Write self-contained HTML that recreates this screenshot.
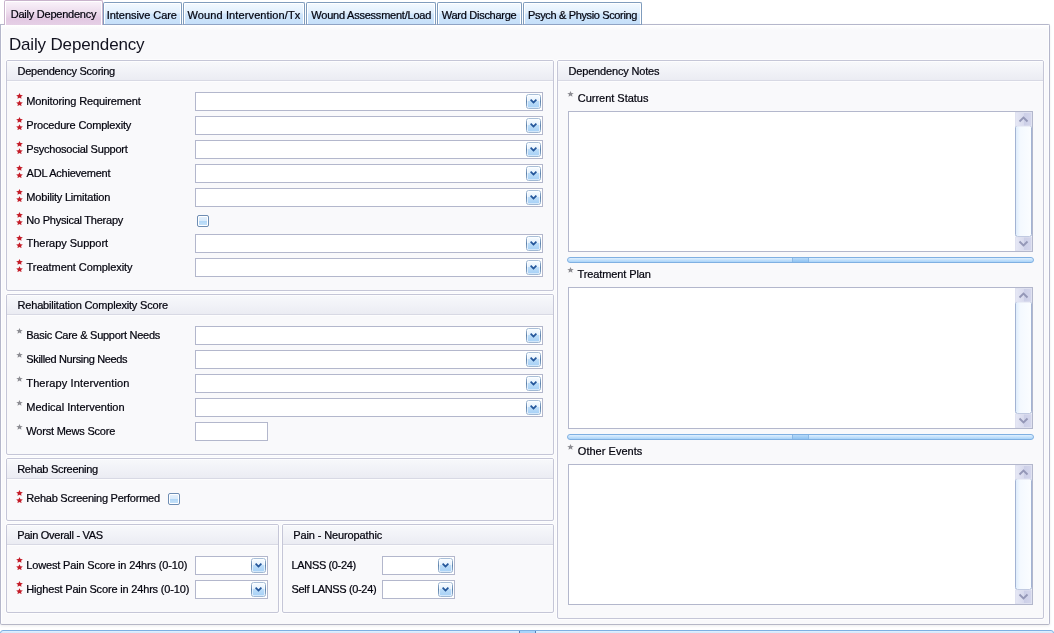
<!DOCTYPE html>
<html><head><meta charset="utf-8"><title>Daily Dependency</title>
<style>
html,body{margin:0;padding:0;background:#fff;}
body{width:1054px;height:633px;position:relative;overflow:hidden;font-family:"Liberation Sans",sans-serif;font-size:11px;color:#14142a;}
.a{position:absolute;}
.t{position:absolute;white-space:pre;line-height:14px;height:14px;color:#04040e;-webkit-text-stroke:0.22px #04040e;}
.panel{position:absolute;left:0;top:24px;width:1048px;height:599px;border:1px solid #b5b7cb;border-bottom-color:#b6b7c6;border-radius:0 2px 2px 2px;background:linear-gradient(#ffffff 0,#f9f9fb 5px);box-shadow:inset 1px 1px 0 #fff,inset -1px 0 0 #fdfdfe,0 1px 3px rgba(0,0,30,0.08);}
.grp{position:absolute;border:1px solid #c5c6d7;border-radius:2px;background:#f9f9fb;box-sizing:border-box;box-shadow:0 0 0 1px #fdfdfe;}
.grp .h{position:absolute;left:0;right:0;top:0;height:19px;border-bottom:1px solid #d8d9e4;background:linear-gradient(#fdfdfe 0,#fdfdfe 1px,#f7f8fb 1px,#ebecf3 100%);border-radius:1px 1px 0 0;box-shadow:0 1px 0 #fdfdfe;}
.in{position:absolute;box-sizing:border-box;height:19px;border:1px solid #b3b7cc;background:#fff;}
.ta{position:absolute;box-sizing:border-box;border:1px solid #b3b7cc;background:#fff;}
.dd{position:absolute;right:1px;top:1px;width:15px;height:15px;}
.cb{position:absolute;box-sizing:border-box;width:12px;height:12px;border:1px solid #6e8db3;border-radius:2px;background:#fff;}
.cb i{position:absolute;left:1px;top:1px;right:1px;bottom:1px;background:linear-gradient(#e3f0fc 0%,#d8eafb 50%,#b3d8f7 55%,#c4e1f9 100%);}
.tab{position:absolute;top:2px;height:23px;box-sizing:border-box;border:1px solid #7f9cbd;border-bottom-color:#8fa3c4;border-radius:2px 2px 0 0;background:linear-gradient(#f3f9ff 0%,#e2f0fd 45%,#cfe5fb 55%,#c6e0f9 100%);box-shadow:inset 1px 1px 0 #fff,inset -1px 0 0 #fff;}
.tab.on{top:0;height:25px;border-color:#c9b3cc;border-bottom:none;background:linear-gradient(#faf3fa 0%,#efe0ef 40%,#e3c9e3 75%,#e6d0e6 100%);}
.spl{position:absolute;box-sizing:border-box;height:6px;border:1px solid #7fb0e2;border-radius:3px;background:linear-gradient(#e0f0ff,#a9d3f8);}
.spl b{position:absolute;left:224px;top:0;width:15px;height:4px;background:linear-gradient(#b8daf9,#8fc3f2);border-left:1px solid #8bb9e6;border-right:1px solid #8bb9e6;}
.sb{position:absolute;right:0;top:0;bottom:0;width:17px;}
</style></head><body>
<svg width="0" height="0" style="position:absolute">
<defs>
<linearGradient id="gdd" x1="0" y1="0" x2="0" y2="1"><stop offset="0" stop-color="#f6fbff"/><stop offset="0.45" stop-color="#e4f1fd"/><stop offset="0.5" stop-color="#bcdcf8"/><stop offset="1" stop-color="#a9d2f6"/></linearGradient>
<linearGradient id="gddb" x1="0" y1="0" x2="0" y2="1"><stop offset="0" stop-color="#a9bfd8"/><stop offset="0.5" stop-color="#5f84ad"/><stop offset="1" stop-color="#9fb8d4"/></linearGradient>
<linearGradient id="gsbb" x1="0" y1="0" x2="1" y2="0"><stop offset="0" stop-color="#e6e8f5"/><stop offset="0.5" stop-color="#d9dbee"/><stop offset="0.55" stop-color="#cccfe7"/><stop offset="1" stop-color="#d4d6ec"/></linearGradient>
<linearGradient id="gth" x1="0" y1="0" x2="1" y2="0"><stop offset="0" stop-color="#dcebfb"/><stop offset="0.3" stop-color="#f4f9ff"/><stop offset="1" stop-color="#fbfdff"/></linearGradient>
<symbol id="dd" viewBox="0 0 15 15"><rect x="0.5" y="0.5" width="14" height="14" rx="2" fill="#fff" stroke="url(#gddb)"/><rect x="1.6" y="1.6" width="11.8" height="11.8" rx="0.8" fill="url(#gdd)"/><path d="M4 6.2 L5.2 5 L7.5 7.3 L9.8 5 L11 6.2 L7.5 9.8 Z" fill="#24569a"/></symbol>
<symbol id="rs" viewBox="0 0 7 13"><path id="st" d="M3.50 0.00 L4.47 1.99 L6.83 2.22 L5.07 3.69 L5.56 5.83 L3.50 4.74 L1.44 5.83 L1.93 3.69 L0.17 2.22 L2.53 1.99 Z" fill="#c41c28"/><use href="#st" y="7.3"/></symbol>
<symbol id="gs" viewBox="0 0 7 6"><path d="M3.50 0.00 L4.38 2.01 L6.73 2.16 L4.93 3.55 L5.50 5.66 L3.50 4.51 L1.50 5.66 L2.07 3.55 L0.27 2.16 L2.62 2.01 Z" fill="#8c8c92"/></symbol>
</defs></svg>

<div class="panel"></div>
<div class="tab on" style="left:4px;width:99px"></div>
<div class="tab" style="left:103px;width:79px"></div>
<div class="tab" style="left:183px;width:122px"></div>
<div class="tab" style="left:306px;width:130px"></div>
<div class="tab" style="left:437px;width:85px"></div>
<div class="tab" style="left:523px;width:119px"></div>
<div class="grp" style="left:6px;top:60px;width:548px;height:231px"><div class="h"></div></div>
<div class="grp" style="left:6px;top:294px;width:548px;height:161px"><div class="h"></div></div>
<div class="grp" style="left:6px;top:458px;width:548px;height:63px"><div class="h"></div></div>
<div class="grp" style="left:6px;top:524px;width:273px;height:89px"><div class="h"></div></div>
<div class="grp" style="left:282px;top:524px;width:272px;height:89px"><div class="h"></div></div>
<div class="grp" style="left:557px;top:60px;width:487px;height:559px"><div class="h"></div></div>
<div class="in" style="left:195px;top:92px;width:348px"><svg class="dd"><use href="#dd"/></svg></div>
<div class="in" style="left:195px;top:116px;width:348px"><svg class="dd"><use href="#dd"/></svg></div>
<div class="in" style="left:195px;top:140px;width:348px"><svg class="dd"><use href="#dd"/></svg></div>
<div class="in" style="left:195px;top:164px;width:348px"><svg class="dd"><use href="#dd"/></svg></div>
<div class="in" style="left:195px;top:188px;width:348px"><svg class="dd"><use href="#dd"/></svg></div>
<div class="in" style="left:195px;top:234px;width:348px"><svg class="dd"><use href="#dd"/></svg></div>
<div class="in" style="left:195px;top:258px;width:348px"><svg class="dd"><use href="#dd"/></svg></div>
<div class="in" style="left:195px;top:326px;width:348px"><svg class="dd"><use href="#dd"/></svg></div>
<div class="in" style="left:195px;top:350px;width:348px"><svg class="dd"><use href="#dd"/></svg></div>
<div class="in" style="left:195px;top:374px;width:348px"><svg class="dd"><use href="#dd"/></svg></div>
<div class="in" style="left:195px;top:398px;width:348px"><svg class="dd"><use href="#dd"/></svg></div>
<div class="in" style="left:195px;top:422px;width:73px"></div>
<div class="in" style="left:195px;top:556px;width:73px"><svg class="dd"><use href="#dd"/></svg></div>
<div class="in" style="left:195px;top:580px;width:73px"><svg class="dd"><use href="#dd"/></svg></div>
<div class="in" style="left:382px;top:556px;width:73px"><svg class="dd"><use href="#dd"/></svg></div>
<div class="in" style="left:382px;top:580px;width:73px"><svg class="dd"><use href="#dd"/></svg></div>
<div class="cb" style="left:197px;top:215px"><i></i></div>
<div class="cb" style="left:168px;top:493px"><i></i></div>
<svg class="a" style="left:16.4px;top:93.2px" width="7" height="13"><use href="#rs"/></svg>
<svg class="a" style="left:16.4px;top:117.2px" width="7" height="13"><use href="#rs"/></svg>
<svg class="a" style="left:16.4px;top:141.2px" width="7" height="13"><use href="#rs"/></svg>
<svg class="a" style="left:16.4px;top:165.2px" width="7" height="13"><use href="#rs"/></svg>
<svg class="a" style="left:16.4px;top:189.2px" width="7" height="13"><use href="#rs"/></svg>
<svg class="a" style="left:16.4px;top:212.2px" width="7" height="13"><use href="#rs"/></svg>
<svg class="a" style="left:16.4px;top:235.2px" width="7" height="13"><use href="#rs"/></svg>
<svg class="a" style="left:16.4px;top:259.2px" width="7" height="13"><use href="#rs"/></svg>
<svg class="a" style="left:16.4px;top:490.2px" width="7" height="13"><use href="#rs"/></svg>
<svg class="a" style="left:16.4px;top:557.2px" width="7" height="13"><use href="#rs"/></svg>
<svg class="a" style="left:16.4px;top:581.2px" width="7" height="13"><use href="#rs"/></svg>
<svg class="a" style="left:16.3px;top:327.7px" width="7" height="6"><use href="#gs"/></svg>
<svg class="a" style="left:16.3px;top:351.7px" width="7" height="6"><use href="#gs"/></svg>
<svg class="a" style="left:16.3px;top:375.7px" width="7" height="6"><use href="#gs"/></svg>
<svg class="a" style="left:16.3px;top:399.7px" width="7" height="6"><use href="#gs"/></svg>
<svg class="a" style="left:16.3px;top:423.7px" width="7" height="6"><use href="#gs"/></svg>
<svg class="a" style="left:567.3px;top:90.7px" width="7" height="6"><use href="#gs"/></svg>
<svg class="a" style="left:567.3px;top:266.7px" width="7" height="6"><use href="#gs"/></svg>
<svg class="a" style="left:567.3px;top:443.7px" width="7" height="6"><use href="#gs"/></svg>
<div class="ta" style="left:568px;top:111px;width:465px;height:141px">
<svg class="sb" width="17" height="139" viewBox="0 0 17 139">
<rect x="0.5" y="13.5" width="16" height="111" rx="2" fill="url(#gth)" stroke="#a3b3d3"/>
<rect x="0.5" y="0.5" width="16" height="13.5" fill="url(#gsbb)" stroke="#dfe1f0"/>
<rect x="0.5" y="125.0" width="16" height="13.5" fill="url(#gsbb)" stroke="#dfe1f0"/>
<path d="M4.5 9.5 L8.5 5.5 L12.5 9.5" fill="none" stroke="#9497b7" stroke-width="1.8"/>
<path d="M4.5 129.5 L8.5 133.5 L12.5 129.5" fill="none" stroke="#9497b7" stroke-width="1.8"/>
</svg></div>
<div class="ta" style="left:568px;top:287px;width:465px;height:142px">
<svg class="sb" width="17" height="140" viewBox="0 0 17 140">
<rect x="0.5" y="13.5" width="16" height="112" rx="2" fill="url(#gth)" stroke="#a3b3d3"/>
<rect x="0.5" y="0.5" width="16" height="13.5" fill="url(#gsbb)" stroke="#dfe1f0"/>
<rect x="0.5" y="126.0" width="16" height="13.5" fill="url(#gsbb)" stroke="#dfe1f0"/>
<path d="M4.5 9.5 L8.5 5.5 L12.5 9.5" fill="none" stroke="#9497b7" stroke-width="1.8"/>
<path d="M4.5 130.5 L8.5 134.5 L12.5 130.5" fill="none" stroke="#9497b7" stroke-width="1.8"/>
</svg></div>
<div class="ta" style="left:568px;top:464px;width:465px;height:141px">
<svg class="sb" width="17" height="139" viewBox="0 0 17 139">
<rect x="0.5" y="13.5" width="16" height="111" rx="2" fill="url(#gth)" stroke="#a3b3d3"/>
<rect x="0.5" y="0.5" width="16" height="13.5" fill="url(#gsbb)" stroke="#dfe1f0"/>
<rect x="0.5" y="125.0" width="16" height="13.5" fill="url(#gsbb)" stroke="#dfe1f0"/>
<path d="M4.5 9.5 L8.5 5.5 L12.5 9.5" fill="none" stroke="#9497b7" stroke-width="1.8"/>
<path d="M4.5 129.5 L8.5 133.5 L12.5 129.5" fill="none" stroke="#9497b7" stroke-width="1.8"/>
</svg></div>
<div class="spl" style="left:567px;top:257px;width:467px"><b></b></div>
<div class="spl" style="left:567px;top:434px;width:467px"><b></b></div>
<div class="a" style="left:0;top:630px;width:1054px;height:6px;box-sizing:border-box;border:1px solid #7fb0e2;border-radius:3px;background:linear-gradient(#e0f0ff,#c4e1fa)"></div>
<div class="a" style="left:519px;top:631px;width:15px;height:3px;background:#a8d4fa;border-left:1px solid #4f7fb5;border-right:1px solid #4f7fb5"></div>
<div class="a" style="left:0;top:0;width:1054px;height:633px;will-change:transform">
<div class="t" style="left:10.8px;top:7.19px;letter-spacing:-0.245px">Daily Dependency</div>
<div class="t" style="left:106.8px;top:8.19px;letter-spacing:-0.057px">Intensive Care</div>
<div class="t" style="left:187.5px;top:8.19px;letter-spacing:0.117px">Wound Intervention/Tx</div>
<div class="t" style="left:311.3px;top:8.19px;letter-spacing:-0.227px">Wound Assessment/Load</div>
<div class="t" style="left:441.7px;top:8.19px;letter-spacing:-0.266px">Ward Discharge</div>
<div class="t" style="left:528.1px;top:8.19px;letter-spacing:-0.356px">Psych &amp; Physio Scoring</div>
<div class="t" style="left:8.9px;top:34.11px;letter-spacing:-0.151px;font-size:17px;line-height:22px;height:22px;-webkit-text-stroke:0;color:#12121f">Daily Dependency</div>
<div class="t" style="left:17.6px;top:64.19px;letter-spacing:-0.266px">Dependency Scoring</div>
<div class="t" style="left:17.5px;top:298.19px;letter-spacing:-0.177px">Rehabilitation Complexity Score</div>
<div class="t" style="left:17.2px;top:462.19px;letter-spacing:-0.287px">Rehab Screening</div>
<div class="t" style="left:17.2px;top:528.19px;letter-spacing:-0.288px">Pain Overall - VAS</div>
<div class="t" style="left:293.3px;top:528.19px;letter-spacing:-0.124px">Pain - Neuropathic</div>
<div class="t" style="left:568.5px;top:64.19px;letter-spacing:-0.171px">Dependency Notes</div>
<div class="t" style="left:26.3px;top:94.19px;letter-spacing:-0.133px">Monitoring Requirement</div>
<div class="t" style="left:26.3px;top:118.19px;letter-spacing:-0.169px">Procedure Complexity</div>
<div class="t" style="left:26.3px;top:142.19px;letter-spacing:-0.225px">Psychosocial Support</div>
<div class="t" style="left:26.6px;top:166.19px;letter-spacing:-0.224px">ADL Achievement</div>
<div class="t" style="left:26.3px;top:190.19px;letter-spacing:-0.190px">Mobility Limitation</div>
<div class="t" style="left:26.3px;top:213.19px;letter-spacing:-0.239px">No Physical Therapy</div>
<div class="t" style="left:26.6px;top:236.19px;letter-spacing:-0.031px">Therapy Support</div>
<div class="t" style="left:26.6px;top:260.19px;letter-spacing:-0.062px">Treatment Complexity</div>
<div class="t" style="left:26.3px;top:328.19px;letter-spacing:-0.266px">Basic Care &amp; Support Needs</div>
<div class="t" style="left:26.3px;top:352.19px;letter-spacing:-0.346px">Skilled Nursing Needs</div>
<div class="t" style="left:26.3px;top:376.19px;letter-spacing:0.111px">Therapy Intervention</div>
<div class="t" style="left:26.3px;top:400.19px;letter-spacing:-0.008px">Medical Intervention</div>
<div class="t" style="left:26.3px;top:424.19px;letter-spacing:-0.206px">Worst Mews Score</div>
<div class="t" style="left:26.3px;top:491.19px;letter-spacing:-0.234px">Rehab Screening Performed</div>
<div class="t" style="left:26.3px;top:558.19px;letter-spacing:-0.166px">Lowest Pain Score in 24hrs (0-10)</div>
<div class="t" style="left:26.3px;top:582.19px;letter-spacing:-0.174px">Highest Pain Score in 24hrs (0-10)</div>
<div class="t" style="left:291.6px;top:558.19px;letter-spacing:-0.362px">LANSS (0-24)</div>
<div class="t" style="left:291.6px;top:582.19px;letter-spacing:-0.343px">Self LANSS (0-24)</div>
<div class="t" style="left:577.8px;top:91.19px;letter-spacing:-0.025px">Current Status</div>
<div class="t" style="left:577.5px;top:267.19px;letter-spacing:-0.100px">Treatment Plan</div>
<div class="t" style="left:577.8px;top:444.19px;letter-spacing:0.027px">Other Events</div>
</div>
</body></html>
